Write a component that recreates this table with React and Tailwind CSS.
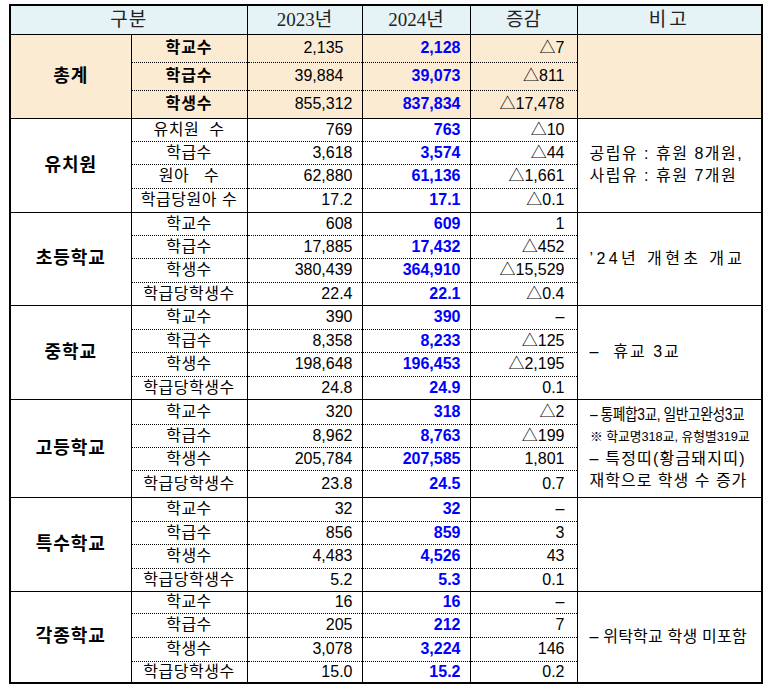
import React from 'react';

const FONT = { fontFamily: '"Liberation Sans", "Noto Sans CJK KR", sans-serif' };

const total = [
  ['학교수', '2,135', '2,128', '△7', true],
  ['학급수', '39,884', '39,073', '△811', true],
  ['학생수', '855,312', '837,834', '△17,478', false],
];

const groups = [
  {
    name: '유치원',
    heights: ['h-[23px]', 'h-[23px]', 'h-[24px]', 'h-[24px]'],
    rows: [
      ['유치원  수', '769', '763', '△10'],
      ['학급수', '3,618', '3,574', '△44'],
      ['원아   수', '62,880', '61,136', '△1,661'],
      ['학급당원아 수', '17.2', '17.1', '△0.1'],
    ],
    remark: (
      <div className="text-[16px] leading-[22px] tracking-[1.5px] whitespace-pre">
        <div>공립유 : 휴원 8개원,</div>
        <div>사립유 : 휴원 7개원</div>
      </div>
    ),
  },
  {
    name: '초등학교',
    heights: ['h-[23px]', 'h-[23px]', 'h-[24px]', 'h-[23px]'],
    rows: [
      ['학교수', '608', '609', '1'],
      ['학급수', '17,885', '17,432', '△452'],
      ['학생수', '380,439', '364,910', '△15,529'],
      ['학급당학생수', '22.4', '22.1', '△0.4'],
    ],
    remark: <div className="text-[16px] tracking-[3.4px] whitespace-pre">’24년 개현초 개교</div>,
  },
  {
    name: '중학교',
    heights: ['h-[24px]', 'h-[23px]', 'h-[24px]', 'h-[23px]'],
    rows: [
      ['학교수', '390', '390', '–'],
      ['학급수', '8,358', '8,233', '△125'],
      ['학생수', '198,648', '196,453', '△2,195'],
      ['학급당학생수', '24.8', '24.9', '0.1'],
    ],
    remark: <div className="text-[16px] tracking-[2px] whitespace-pre">–  휴교 3교</div>,
  },
  {
    name: '고등학교',
    heights: ['h-[25px]', 'h-[23px]', 'h-[23px]', 'h-[27px]'],
    rows: [
      ['학교수', '320', '318', '△2'],
      ['학급수', '8,962', '8,763', '△199'],
      ['학생수', '205,784', '207,585', '1,801'],
      ['학급당학생수', '23.8', '24.5', '0.7'],
    ],
    remark: (
      <div className="leading-[22px] whitespace-pre">
        <div className="text-[16px]">
          <span className="inline-block origin-left scale-x-[0.86] tracking-[-0.5px]">– 통폐합3교, 일반고완성3교</span>
        </div>
        <div className="text-[13px]">
          <span className="inline-block origin-left scale-x-[0.98]">※ 학교명318교, 유형별319교</span>
        </div>
        <div className="text-[16px] tracking-[1.2px]">– 특정띠(황금돼지띠)</div>
        <div className="text-[16px] tracking-[1px]">재학으로 학생 수 증가</div>
      </div>
    ),
  },
  {
    name: '특수학교',
    heights: ['h-[24px]', 'h-[23px]', 'h-[24px]', 'h-[23px]'],
    rows: [
      ['학교수', '32', '32', '–'],
      ['학급수', '856', '859', '3'],
      ['학생수', '4,483', '4,526', '43'],
      ['학급당학생수', '5.2', '5.3', '0.1'],
    ],
    remark: null,
  },
  {
    name: '각종학교',
    heights: ['h-[22px]', 'h-[24px]', 'h-[24px]', 'h-[22px]'],
    rows: [
      ['학교수', '16', '16', '–'],
      ['학급수', '205', '212', '7'],
      ['학생수', '3,078', '3,224', '146'],
      ['학급당학생수', '15.0', '15.2', '0.2'],
    ],
    remark: <div className="text-[16px] tracking-[0.2px] whitespace-pre">– 위탁학교 학생 미포함</div>,
  },
];

function edge(i, n) {
  let c = 'border border-black';
  if (i > 0) c += ' [border-top-style:dotted]';
  if (i < n - 1) c += ' [border-bottom-style:dotted]';
  return c;
}

export default function App() {
  return (
    <div className="w-[775px] h-[692px] bg-white pt-[4px] pl-[9px]" style={FONT}>
      <table className="table-fixed border-collapse border-2 border-black w-[752px] text-[16px] text-black">
        <colgroup>
          <col className="w-[121px]" />
          <col className="w-[116px]" />
          <col className="w-[115px]" />
          <col className="w-[108px]" />
          <col className="w-[107px]" />
          <col className="w-[185px]" />
        </colgroup>
        <thead>
          <tr className="h-[29px] bg-[#e5f2f6] text-[19px] text-[#222]" style={{ fontFamily: '"Liberation Serif", "Noto Sans CJK KR", serif' }}>
            <th colSpan={2} className="border border-black font-normal p-0 leading-none tracking-[1px]">구분</th>
            <th className="border border-black font-normal p-0 leading-none">2023년</th>
            <th className="border border-black font-normal p-0 leading-none">2024년</th>
            <th className="border border-black font-normal p-0 leading-none">증감</th>
            <th className="border border-black font-normal p-0 leading-none tracking-[3px]">비고</th>
          </tr>
        </thead>
        <tbody>
          {total.map((r, i) => (
            <tr key={'t' + i} className="h-[28px] bg-[#fcebd3]">
              {i === 0 && (
                <td rowSpan={3} className="border border-black text-center font-bold text-[18px] tracking-[1px] p-0">
                  총계
                </td>
              )}
              <td className={edge(i, 3) + ' text-center p-0 leading-none font-semibold tracking-[1px]'}>{r[0]}</td>
              <td className={edge(i, 3) + (r[4] ? ' pr-[18px]' : ' pr-[9px]') + ' text-right p-0 leading-none'}>{r[1]}</td>
              <td className={edge(i, 3) + ' text-right pr-[9px] p-0 leading-none text-[#0000ff] font-bold'}>{r[2]}</td>
              <td className={edge(i, 3) + ' text-right pr-[12px] p-0 leading-none'}>{r[3]}</td>
              {i === 0 && <td rowSpan={3} className="border border-black p-0" />}
            </tr>
          ))}
          {groups.map((g) =>
            g.rows.map((r, i) => (
              <tr key={g.name + i} className={g.heights[i]}>
                {i === 0 && (
                  <td rowSpan={4} className="border border-black text-center font-bold text-[18px] tracking-[1px] p-0">
                    {g.name}
                  </td>
                )}
                <td className={edge(i, 4) + ' text-center p-0 leading-none whitespace-pre tracking-[0.5px]'}>{r[0]}</td>
                <td className={edge(i, 4) + ' text-right pr-[9px] p-0 leading-none'}>{r[1]}</td>
                <td className={edge(i, 4) + ' text-right pr-[9px] p-0 leading-none text-[#0000ff] font-bold'}>{r[2]}</td>
                <td className={edge(i, 4) + ' text-right pr-[12px] p-0 leading-none'}>{r[3]}</td>
                {i === 0 && (
                  <td rowSpan={4} className="border border-black pl-[12px] pr-0 py-0 align-middle">
                    {g.remark}
                  </td>
                )}
              </tr>
            ))
          )}
        </tbody>
      </table>
    </div>
  );
}
